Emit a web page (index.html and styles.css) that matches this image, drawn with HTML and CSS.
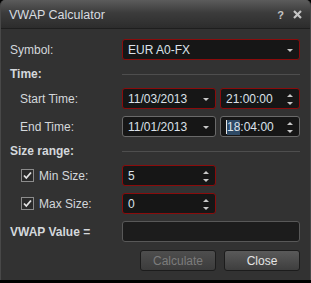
FILE: index.html
```html
<!DOCTYPE html>
<html lang="en">
<head>
  <meta charset="UTF-8">
  <title>VWAP Calculator</title>
  <link rel="stylesheet" href="styles.css">
</head>
<body>
  <div class="window">
    <div class="titlebar">
      <span class="title">VWAP Calculator</span>
      <span class="tools">
        <span class="help">?</span>
        <svg class="close" width="9" height="9" viewBox="0 0 9 9"><path d="M1 1L8 8M8 1L1 8" stroke="#c4c4c4" stroke-width="2.2"/></svg>
      </span>
    </div>
    <div class="content">
      <div class="row">
        <span class="label">Symbol:</span>
        <div class="field wide invalid"><span class="value">EUR A0-FX</span><i class="caret"></i></div>
      </div>
      <div class="section">
        <span class="label bold">Time:</span>
        <div class="rule"></div>
      </div>
      <div class="row">
        <span class="label indent">Start Time:</span>
        <div class="pair">
          <div class="field date invalid"><span class="value">11/03/2013</span><i class="caret"></i></div>
          <div class="field time invalid"><span class="value">21:00:00</span><span class="spin"><i class="up"></i><i class="down"></i></span></div>
        </div>
      </div>
      <div class="row">
        <span class="label indent">End Time:</span>
        <div class="pair">
          <div class="field date"><span class="value">11/01/2013</span><i class="caret"></i></div>
          <div class="field time"><span class="value"><b class="cursor"></b><span class="sel">18</span>:04:00</span><span class="spin"><i class="up"></i><i class="down"></i></span></div>
        </div>
      </div>
      <div class="section">
        <span class="label bold">Size range:</span>
        <div class="rule"></div>
      </div>
      <div class="row">
        <span class="label indent check">
          <svg class="box" width="13" height="13" viewBox="0 0 13 13"><rect x="0.5" y="0.5" width="12" height="12" fill="#2a2a2a" stroke="#8c8c8c"/><path d="M3 6.5L5.3 9L10 3.5" fill="none" stroke="#e4e4e4" stroke-width="1.8"/></svg>
          Min Size:
        </span>
        <div class="field date invalid"><span class="value">5</span><span class="spin"><i class="up"></i><i class="down"></i></span></div>
      </div>
      <div class="row">
        <span class="label indent check">
          <svg class="box" width="13" height="13" viewBox="0 0 13 13"><rect x="0.5" y="0.5" width="12" height="12" fill="#2a2a2a" stroke="#8c8c8c"/><path d="M3 6.5L5.3 9L10 3.5" fill="none" stroke="#e4e4e4" stroke-width="1.8"/></svg>
          Max Size:
        </span>
        <div class="field date invalid"><span class="value">0</span><span class="spin"><i class="up"></i><i class="down"></i></span></div>
      </div>
      <div class="row">
        <span class="label bold">VWAP Value =</span>
        <div class="field wide result"></div>
      </div>
      <div class="buttons">
        <button class="btn" disabled>Calculate</button>
        <button class="btn">Close</button>
      </div>
    </div>
  </div>
</body>
</html>
```

FILE: styles.css
```css
body {
  margin: 0;
  background-color: #000;
  font-family: "Liberation Sans", Arial, sans-serif;
  font-size: 12px;
  color: #d4d8dc;
}
.window {
  width: 309px;
  height: 280px;
  background-color: #323232;
  border-left: 1px solid #484848;
  border-right: 1px solid #484848;
  border-radius: 5px 5px 0 0;
  overflow: hidden;
}
.titlebar {
  height: 29px;
  display: flex;
  align-items: center;
  justify-content: space-between;
  padding: 1px 8px 0 8px;
  box-sizing: border-box;
  background: linear-gradient(#5c5c5c, #3c3c3c 45%, #2c2c2c);
  border-bottom: 1px solid #1e1e1e;
}
.title {
  font-size: 12.5px;
  color: #d8dce0;
}
.tools {
  display: flex;
  align-items: center;
  gap: 9px;
}
.help {
  font-weight: bold;
  font-size: 11px;
  color: #c4c4c4;
}
.content {
  display: flex;
  flex-direction: column;
  gap: 7px;
  padding: 10px 10px 0 9px;
}
.row {
  display: flex;
  align-items: center;
  height: 21px;
}
.label {
  width: 112px;
  flex: none;
  box-sizing: border-box;
}
.bold {
  font-weight: bold;
}
.indent {
  padding-left: 10px;
}
.check {
  display: flex;
  align-items: center;
  gap: 5px;
  padding-left: 11px;
}
.section {
  display: flex;
  align-items: center;
  height: 14px;
}
.rule {
  flex: 1;
  height: 1px;
  background-color: #4e4e4e;
}
.pair {
  display: flex;
  gap: 4px;
}
.field {
  height: 21px;
  box-sizing: border-box;
  border: 1px solid #6a6a6a;
  border-radius: 3px;
  background-color: #161616;
  display: flex;
  align-items: center;
  justify-content: space-between;
  padding: 1px 6px 0 5px;
  color: #dce2ea;
}
.invalid {
  border-color: #8a0c0c;
}
.wide {
  width: 178px;
}
.date {
  width: 94px;
}
.time {
  width: 80px;
}
.result {
  border-color: #585858;
  background-color: #1c1c1c;
  width: 179px;
}
.caret {
  width: 0;
  height: 0;
  border-left: 3px solid transparent;
  border-right: 3px solid transparent;
  border-top: 3px solid #c8c8c8;
  margin-top: 1px;
}
.spin {
  display: flex;
  flex-direction: column;
  gap: 5px;
}
.spin .up, .spin .down {
  width: 0;
  height: 0;
  border-left: 3px solid transparent;
  border-right: 3px solid transparent;
}
.spin .up {
  border-bottom: 3px solid #c8c8c8;
}
.spin .down {
  border-top: 3px solid #c8c8c8;
}
.value {
  display: flex;
  align-items: center;
}
.cursor {
  width: 1px;
  height: 14px;
  background-color: #e8e8e8;
}
.sel {
  background-color: #2e4a66;
  line-height: 15px;
}
.buttons {
  display: flex;
  justify-content: flex-end;
  gap: 8px;
  margin-top: 1px;
}
.btn {
  width: 76px;
  height: 21px;
  border: 1px solid #1c1c1c;
  border-radius: 3px;
  background: linear-gradient(#5a5a5a, #3e3e3e);
  color: #e4e4e4;
  font-family: "Liberation Sans", Arial, sans-serif;
  font-size: 12px;
  padding: 0;
}
.btn:disabled {
  background: linear-gradient(#4e4e4e, #3c3c3c);
  color: #7c7c7c;
}
```
